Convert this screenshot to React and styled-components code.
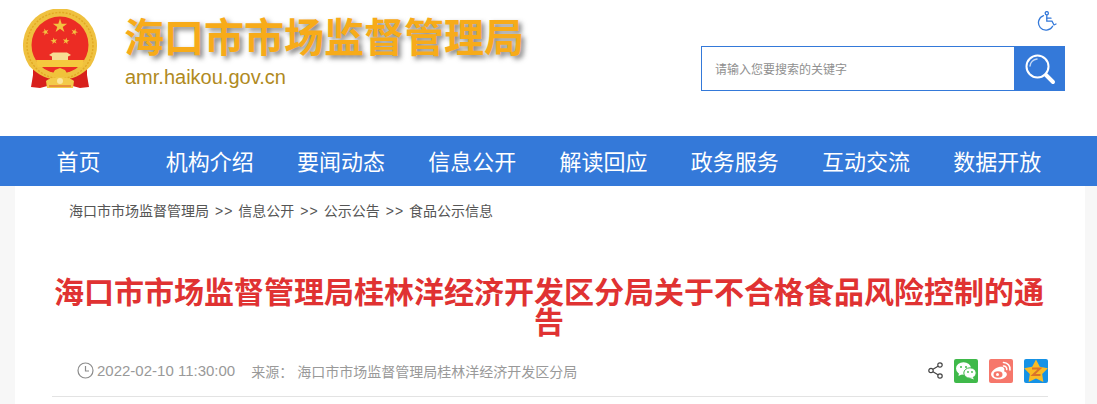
import React from 'react';
import styled, { createGlobalStyle } from 'styled-components';

const CJK = '"Noto Sans CJK SC", "Liberation Sans", sans-serif';

const GlobalStyle = createGlobalStyle`
  html, body {
    margin: 0;
    padding: 0;
    background: #f7f7f7;
    font-family: ${CJK};
  }
`;

const Page = styled.div`
  width: 1097px;
  height: 404px;
  overflow: hidden;
`;

const Header = styled.header`
  height: 136px;
  background: #fff;
  display: flex;
  justify-content: space-between;
  padding: 0 32px 0 22px;
  box-sizing: border-box;
`;

const Brand = styled.div`
  display: flex;
  padding-top: 9px;
`;

const BrandText = styled.div`
  margin-left: 26px;
  padding-top: 1px;
`;

const SiteName = styled.div`
  font-size: 40px;
  font-weight: 700;
  line-height: 50px;
  color: #f7ab19;
  text-shadow: 3px 3px 5px rgba(50, 50, 50, 0.6);
`;

const SiteUrl = styled.div`
  font-family: "Liberation Sans", sans-serif;
  font-size: 20px;
  line-height: 24px;
  margin: 5px 0 0 1px;
  color: #b08a1e;
`;

const Tools = styled.div`
  display: flex;
  flex-direction: column;
  align-items: flex-end;
  padding-top: 11px;
`;

const Access = styled.div`
  height: 20px;
  margin: 0 8px 15px 0;
`;

const SearchBox = styled.div`
  display: flex;
  width: 364px;
  height: 45px;
  box-sizing: border-box;
  border: 1px solid #3479d9;
`;

const SearchText = styled.div`
  flex: 1;
  padding-left: 13px;
  font-size: 12px;
  line-height: 43px;
  color: #8f8f8f;
`;

const SearchBtn = styled.div`
  width: 51px;
  margin: -1px;
  background: #3479d9;
  display: flex;
  align-items: center;
  justify-content: center;
`;

const Nav = styled.nav`
  height: 50px;
  background: #3479d9;
  padding-left: 13px;
  display: grid;
  grid-template-columns: repeat(8, 131.25px);
`;

const NavItem = styled.a`
  font-size: 22px;
  line-height: 48px;
  color: #fff;
  text-align: center;
`;

const Main = styled.main`
  width: 1070px;
  margin-left: 15px;
  background: #fff;
  height: 218px;
`;

const Crumbs = styled.div`
  padding: 14px 0 0 54px;
  font-size: 14px;
  line-height: 20px;
  height: 21px;
  color: #555;
`;

const Sep = styled.span`
  margin: 0 5px 0 6px;
  font-family: "Liberation Sans", sans-serif;
  letter-spacing: 1px;
`;

const Article = styled.div`
  padding: 0 37px;
`;

const Title = styled.h1`
  margin: 0 2px 0 0;
  padding-top: 54px;
  font-size: 30px;
  line-height: 30px;
  font-weight: 700;
  color: #e03232;
  text-align: center;
`;

const Meta = styled.div`
  margin-top: 10px;
  height: 52px;
  box-sizing: border-box;
  border-bottom: 1px solid #e3e3e3;
  display: flex;
  align-items: center;
  justify-content: space-between;
  padding: 0 0 0 25px;
  color: #999;
`;

const Info = styled.div`
  display: flex;
  align-items: center;
`;

const Time = styled.span`
  font-family: "Liberation Sans", sans-serif;
  font-size: 15px;
  margin: 0 16px 0 3px;
`;

const Source = styled.span`
  font-size: 14px;
  margin-right: 4px;
`;

const Share = styled.div`
  display: flex;
  align-items: center;
  gap: 11px;
`;

const ShareTile = styled.div`
  width: 24px;
  height: 24px;
  border-radius: 2px;
  background: ${(p) => p.$bg};
  display: flex;
  align-items: center;
  justify-content: center;
`;

const navItems = ['首页', '机构介绍', '要闻动态', '信息公开', '解读回应', '政务服务', '互动交流', '数据开放'];
const crumbs = ['海口市市场监督管理局', '信息公开', '公示公告', '食品公示信息'];

const star = (cx, cy, r, rot = 0, inner = 0.38) => {
  const pts = [];
  for (let i = 0; i < 10; i++) {
    const rad = i % 2 ? r * inner : r;
    const a = ((i * 36 + rot - 90) * Math.PI) / 180;
    pts.push(`${(cx + rad * Math.cos(a)).toFixed(2)},${(cy + rad * Math.sin(a)).toFixed(2)}`);
  }
  return pts.join(' ');
};

function Emblem() {
  return (
    <svg width="76" height="80" viewBox="0 0 76 80">
      <path d="M11 56 L28 66 L29 76 L18 79 L9 78 L11 66 Z" fill="#d8201c" />
      <path d="M65 56 L48 66 L47 76 L58 79 L67 78 L65 66 Z" fill="#d8201c" />
      <path d="M7.3 57 A37 37 0 1 1 68.7 57 C60 66 50 71 38 71 C26 71 16 66 7.3 57 Z" fill="#efc13f" />
      <circle cx="38" cy="36.5" r="33" fill="none" stroke="#e2a823" strokeWidth="1.4" strokeDasharray="2 1.5" />
      <circle cx="38" cy="36" r="28.5" fill="#ec2c24" />
      <polygon points={star(38, 17, 7.5)} fill="#f2c341" />
      <polygon points={star(23.5, 23, 3.6, -20)} fill="#f2c341" />
      <polygon points={star(52.5, 23, 3.6, 20)} fill="#f2c341" />
      <polygon points={star(32, 32, 3.6, -10)} fill="#f2c341" />
      <polygon points={star(44, 32, 3.6, 10)} fill="#f2c341" />
      <path d="M27 46 L31 43.5 H45 L49 46 L46 47.5 V51 H30 V47.5 Z" fill="#f7dd93" />
      <path d="M14 51 H62 L60 58 H16 Z" fill="#f5c83e" />
      <path d="M30 66 L33 61 L38 59 L43 61 L46 66 L38 68 Z" fill="#f0c23a" />
      <path d="M24 72 C30 67 46 67 52 72 L51 79 H25 Z" fill="#f3ca4a" />
      <circle cx="38" cy="72" r="3" fill="#fbe7a0" />
      <path d="M27 77 H49" stroke="#e0552a" strokeWidth="1" />
    </svg>
  );
}

function Wheelchair() {
  return (
    <svg width="20" height="20" viewBox="0 0 20 20" fill="none" stroke="#3479d9" strokeWidth="1.3" strokeLinecap="round">
      <circle cx="9.8" cy="2.2" r="1.6" />
      <path d="M6.5 4.6 A7.5 7.5 0 1 0 15.6 15.2" />
      <path d="M9.8 4.2 V10.2 H15 L17 14 L19 13" />
      <path d="M9.8 7.2 H14" />
    </svg>
  );
}

function SearchIcon() {
  return (
    <svg width="32" height="32" viewBox="0 0 32 32" fill="none" stroke="#fff" strokeLinecap="round">
      <circle cx="13.5" cy="13.5" r="11" strokeWidth="2" />
      <path d="M6 13 A8 8 0 0 1 13 6" strokeWidth="1.5" opacity="0.7" />
      <path d="M22 22 L29 29" strokeWidth="4" />
    </svg>
  );
}

function ClockIcon() {
  return (
    <svg width="17" height="17" viewBox="0 0 17 17" fill="none" stroke="#8c8c8c" strokeWidth="1.2">
      <circle cx="8.5" cy="8.5" r="7.5" />
      <path d="M8.5 4 V9 H12" />
    </svg>
  );
}

function ShareIcon() {
  return (
    <svg width="15" height="17" viewBox="0 0 15 17" fill="none" stroke="#444" strokeWidth="1.2">
      <circle cx="12" cy="3" r="2.2" />
      <circle cx="3" cy="8.5" r="2.2" />
      <circle cx="12" cy="14" r="2.2" />
      <path d="M5 7.3 L10 4.2 M5 9.7 L10 12.8" />
    </svg>
  );
}

function WechatIcon() {
  return (
    <svg width="22" height="20" viewBox="0 0 22 20">
      <ellipse cx="8.5" cy="7.5" rx="7.5" ry="6.2" fill="#fff" />
      <path d="M4 11.5 L3.5 15 L7.5 13 Z" fill="#fff" />
      <ellipse cx="15" cy="12" rx="6.2" ry="5.2" fill="#fff" stroke="#3fb94a" strokeWidth="1" />
      <path d="M17.5 16 L19 18.5 L14.5 16.8 Z" fill="#fff" />
      <circle cx="6" cy="6" r="1" fill="#3fb94a" />
      <circle cx="11" cy="6" r="1" fill="#3fb94a" />
      <circle cx="13" cy="11" r="0.9" fill="#3fb94a" />
      <circle cx="17" cy="11" r="0.9" fill="#3fb94a" />
    </svg>
  );
}

function WeiboIcon() {
  return (
    <svg width="22" height="20" viewBox="0 0 22 20" fill="none">
      <path d="M9 6 C3 8 0 12 1.5 15 C3.5 19 12 19.5 15.5 16 C18.5 13 16 10.5 14 10.5 C15.5 7 13 5 9 6 Z" fill="#fff" />
      <ellipse cx="8" cy="13.5" rx="4.5" ry="3.3" fill="#f6776b" />
      <circle cx="7.5" cy="13.5" r="1.5" fill="#fff" />
      <path d="M13.5 1.5 A6.5 6.5 0 0 1 20 9 M13.5 5 A3 3 0 0 1 16.7 8.5" stroke="#fff" strokeWidth="1.6" strokeLinecap="round" />
    </svg>
  );
}

function QzoneIcon() {
  return (
    <svg width="24" height="24" viewBox="0 0 24 24">
      <polygon points={star(12, 13, 12.5, 0, 0.52)} fill="#f9bb24" />
      <path d="M8 9.5 H16 L9 16 H16.5" fill="none" stroke="#d9742a" strokeWidth="2" />
    </svg>
  );
}

export default function App() {
  return (
    <Page>
      <GlobalStyle />
      <Header>
        <Brand>
          <Emblem />
          <BrandText>
            <SiteName>海口市市场监督管理局</SiteName>
            <SiteUrl>amr.haikou.gov.cn</SiteUrl>
          </BrandText>
        </Brand>
        <Tools>
          <Access><Wheelchair /></Access>
          <SearchBox>
            <SearchText>请输入您要搜索的关键字</SearchText>
            <SearchBtn><SearchIcon /></SearchBtn>
          </SearchBox>
        </Tools>
      </Header>
      <Nav>
        {navItems.map((item) => <NavItem key={item}>{item}</NavItem>)}
      </Nav>
      <Main>
        <Crumbs>
          {crumbs.map((c, i) => (
            <React.Fragment key={c}>
              {i > 0 && <Sep>&gt;&gt;</Sep>}
              {c}
            </React.Fragment>
          ))}
        </Crumbs>
        <Article>
          <Title>海口市市场监督管理局桂林洋经济开发区分局关于不合格食品风险控制的通告</Title>
          <Meta>
            <Info>
              <ClockIcon />
              <Time>2022-02-10 11:30:00</Time>
              <Source>来源：</Source>
              <Source>海口市市场监督管理局桂林洋经济开发区分局</Source>
            </Info>
            <Share>
              <ShareIcon />
              <ShareTile $bg="#3fb94a"><WechatIcon /></ShareTile>
              <ShareTile $bg="#f6776b"><WeiboIcon /></ShareTile>
              <ShareTile $bg="#1592e6"><QzoneIcon /></ShareTile>
            </Share>
          </Meta>
        </Article>
      </Main>
    </Page>
  );
}
